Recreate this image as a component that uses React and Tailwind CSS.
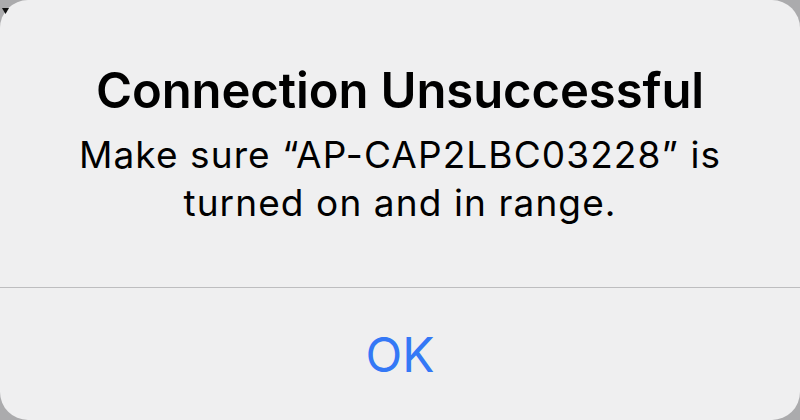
import React from 'react';

export default function App() {
  return (
    <div className="relative w-[800px] h-[420px] bg-[#ababad] overflow-hidden" style={{ fontFamily: 'Inter, "Noto Sans", sans-serif' }}>
      {/* stray cursor mark behind the sheet */}
      <svg className="absolute left-[2px] top-[8px] z-10" width="8" height="8" viewBox="0 0 8 8">
        <polygon points="0,0 7,0 3.5,6" fill="#111" />
      </svg>

      <div className="w-full h-full rounded-[28px] bg-[#efeff0] flex flex-col">
        <div className="h-[287px] flex flex-col items-center pt-[63px] text-black">
          <h1 className="text-[49px] leading-[56px] font-semibold tracking-[-0.1px] whitespace-nowrap">Connection Unsuccessful</h1>
          <p className="mt-[12px] text-[37px] leading-[48px] tracking-[1.1px] text-center whitespace-nowrap">
            Make sure “AP-CAP2LBC03228” is
            <br />
            turned on and in range.
          </p>
        </div>
        <div className="h-px bg-[#bdbdbf]" />
        <button className="flex-1 flex items-center justify-center pt-[2px] text-[48px] text-[#3478f6]">OK</button>
      </div>
    </div>
  );
}
